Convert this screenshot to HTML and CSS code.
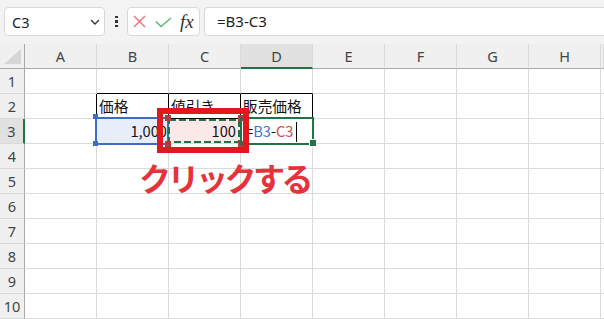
FILE: index.html
```html
<!DOCTYPE html>
<html lang="ja">
<head>
<meta charset="utf-8">
<title>Excel</title>
<link rel="stylesheet" href="styles.css">
</head>
<body>
<div class="toolbar">
  <div class="namebox">
    <span class="name">C3</span>
    <svg class="chev" width="10" height="6" viewBox="0 0 10 6"><path d="M1 1 L5 5 L9 1" fill="none" stroke="#333" stroke-width="1.3"/></svg>
  </div>
  <div class="dots"><i></i><i></i><i></i></div>
  <div class="fbtns">
    <svg class="ic-x" width="13" height="13" viewBox="0 0 13 13"><path d="M1 1 L12 12 M12 1 L1 12" stroke="#e8707a" stroke-width="1.4" fill="none"/></svg>
    <svg class="ic-ok" width="17" height="11" viewBox="0 0 17 11"><path d="M1 4.5 L6 9.5 L16 1" stroke="#5fb575" stroke-width="1.4" fill="none"/></svg>
    <span class="fx">fx</span>
  </div>
  <div class="finput">=B3-C3</div>
</div>

<div class="sheet">
  <div class="h corner"><svg width="17" height="15" viewBox="0 0 17 15"><polygon points="17,0 17,15 0,15" fill="#d6d6d6"/></svg></div>
  <div class="h">A</div><div class="h">B</div><div class="h">C</div><div class="h sel-c">D</div><div class="h">E</div><div class="h">F</div><div class="h">G</div><div class="h">H</div><div class="h"></div>

  <div class="r">1</div><div class="c"></div><div class="c bb"></div><div class="c bb"></div><div class="c bb"></div><div class="c"></div><div class="c"></div><div class="c"></div><div class="c"></div><div class="c"></div>

  <div class="r">2</div><div class="c br"></div><div class="c br bb">価格</div><div class="c br bb">値引き</div><div class="c br bb">販売価格</div><div class="c"></div><div class="c"></div><div class="c"></div><div class="c"></div><div class="c"></div>

  <div class="r sel-r">3</div><div class="c"></div><div class="c num fill-b">1,000</div><div class="c num fill-p">100</div><div class="c edit">=<span class="ref-b">B3</span>-<span class="ref-r">C3</span><span class="caret"></span></div><div class="c"></div><div class="c"></div><div class="c"></div><div class="c"></div><div class="c"></div>

  <div class="r">4</div><div class="c"></div><div class="c"></div><div class="c"></div><div class="c"></div><div class="c"></div><div class="c"></div><div class="c"></div><div class="c"></div><div class="c"></div>
  <div class="r">5</div><div class="c"></div><div class="c"></div><div class="c"></div><div class="c"></div><div class="c"></div><div class="c"></div><div class="c"></div><div class="c"></div><div class="c"></div>
  <div class="r">6</div><div class="c"></div><div class="c"></div><div class="c"></div><div class="c"></div><div class="c"></div><div class="c"></div><div class="c"></div><div class="c"></div><div class="c"></div>
  <div class="r">7</div><div class="c"></div><div class="c"></div><div class="c"></div><div class="c"></div><div class="c"></div><div class="c"></div><div class="c"></div><div class="c"></div><div class="c"></div>
  <div class="r">8</div><div class="c"></div><div class="c"></div><div class="c"></div><div class="c"></div><div class="c"></div><div class="c"></div><div class="c"></div><div class="c"></div><div class="c"></div>
  <div class="r">9</div><div class="c"></div><div class="c"></div><div class="c"></div><div class="c"></div><div class="c"></div><div class="c"></div><div class="c"></div><div class="c"></div><div class="c"></div>
  <div class="r">10</div><div class="c"></div><div class="c"></div><div class="c"></div><div class="c"></div><div class="c"></div><div class="c"></div><div class="c"></div><div class="c"></div><div class="c"></div>

  <div class="sel-blue"></div>
  <div class="hd hd-b hb1"></div>
  <div class="hd hd-b hb2"></div>
  <svg class="ants" width="72" height="24" viewBox="0 0 72 24"><rect x="1" y="1" width="70" height="22" fill="none" stroke="#217346" stroke-width="2" stroke-dasharray="7 3"/></svg>
  <div class="hd hd-r hr1"></div>
  <div class="hd hd-r hr2"></div>
  <div class="hd hd-r hr3"></div>
  <div class="hd hd-r hr4"></div>
  <div class="active"></div>
  <div class="fillh"></div>
  <div class="callout"></div>
  <div class="note">クリックする</div>
</div>
</body>
</html>
```

FILE: styles.css
```css
body {
  margin: 0;
  width: 604px;
  height: 319px;
  overflow: hidden;
  background: #fff;
  font-family: "Noto Sans", "Noto Sans CJK JP", sans-serif;
}

/* ---------- formula bar ---------- */
.toolbar {
  height: 44px;
  box-sizing: border-box;
  background: #f3f3f3;
  display: flex;
  align-items: flex-start;
  padding: 7px 0 0 4px;
}
.namebox {
  width: 101px;
  height: 29px;
  box-sizing: border-box;
  background: #fff;
  border: 1px solid #d9d9d9;
  border-radius: 4px;
  display: flex;
  align-items: center;
  justify-content: space-between;
  padding: 0 4px 0 7px;
}
.name {
  font-size: 14.5px;
  color: #222;
}
.dots {
  margin-left: 10px;
  width: 3px;
  height: 29px;
  display: flex;
  flex-direction: column;
  justify-content: center;
  gap: 2px;
}
.dots i {
  display: block;
  width: 2.5px;
  height: 2.5px;
  background: #333;
}
.fbtns {
  margin-left: 9px;
  width: 73px;
  height: 29px;
  box-sizing: border-box;
  background: #fff;
  border: 1px solid #d9d9d9;
  border-radius: 4px;
  display: flex;
  align-items: center;
  padding-left: 5px;
}
.ic-ok { margin-left: 9px; margin-top: 2px; }
.fx {
  margin-left: 8px;
  font-family: "Liberation Serif", serif;
  font-style: italic;
  font-size: 19px;
  color: #333;
  line-height: 1;
}
.finput {
  margin-left: 4px;
  flex: 1;
  height: 29px;
  box-sizing: border-box;
  background: #fff;
  border: 1px solid #d9d9d9;
  border-right: none;
  border-radius: 4px 0 0 4px;
  padding-left: 12px;
  font-size: 15px;
  line-height: 27px;
  color: #222;
}

/* ---------- sheet grid ---------- */
.sheet {
  position: relative;
  display: grid;
  grid-template-columns: 25px repeat(8, 72px) 3px;
  grid-template-rows: repeat(11, 25px);
  overflow: hidden;
}
.h, .r {
  box-sizing: border-box;
  background: #f0f0f0;
  color: #444;
  font-family: "Noto Sans", sans-serif;
  font-size: 14.5px;
  line-height: 24px;
  text-align: center;
}
.h {
  border-right: 1px solid #dadada;
  border-bottom: 1px solid #a8a8a8;
}
.r {
  border-right: 1px solid #a8a8a8;
  border-bottom: 1px solid #dadada;
}
.corner {
  border-right: 1px solid #a8a8a8;
  display: flex;
  align-items: flex-end;
  justify-content: flex-end;
  padding: 0 3px 4px 0;
}
.corner svg { display: block; }
.sel-c {
  background: #e1e1e1;
  border-bottom: 2px solid #217346;
}
.sel-r {
  background: #e1e1e1;
  border-right: 2px solid #217346;
}
.c {
  box-sizing: border-box;
  border-right: 1px solid #dadada;
  border-bottom: 1px solid #dadada;
  font-family: "Noto Sans CJK JP", sans-serif;
  font-size: 14.67px;
  line-height: 24px;
  padding: 0 2px;
  white-space: nowrap;
  color: #111;
}
.br { border-right-color: #000; }
.bb { border-bottom-color: #000; }
.num { text-align: right; }
.fill-b { background: #e8eef9; padding-right: 1px; }
.fill-p { background: #fbe9ea; padding-right: 4px; }
.edit { padding-left: 4px; }
.ref-b { color: #3f74d4; }
.ref-r { color: #d64c4f; }
.caret {
  display: inline-block;
  width: 1px;
  height: 20px;
  background: #000;
  margin-left: 2px;
  vertical-align: -5px;
}

/* ---------- overlays ---------- */
.sel-blue {
  position: absolute;
  left: 95px;
  top: 73px;
  width: 74px;
  height: 28px;
  box-sizing: border-box;
  border: 2px solid #3c6dc5;
}
.hd {
  position: absolute;
  width: 5px;
  height: 5px;
}
.hd-b { background: #3c6dc5; }
.hd-r { background: #b9373f; width: 6px; height: 6px; }
.hb1 { left: 93px; top: 70px; }
.hb2 { left: 93px; top: 97px; }
.hr1 { left: 165px; top: 71px; }
.hr2 { left: 238px; top: 71px; }
.hr3 { left: 165px; top: 97px; }
.hr4 { left: 238px; top: 97px; }
.ants {
  position: absolute;
  left: 168px;
  top: 75px;
}
.active {
  position: absolute;
  left: 240px;
  top: 73px;
  width: 74px;
  height: 28px;
  box-sizing: border-box;
  border: 2px solid #217346;
}
.fillh {
  position: absolute;
  left: 309px;
  top: 95px;
  width: 8px;
  height: 8px;
  box-sizing: border-box;
  background: #217346;
  border: 1px solid #fff;
}
.callout {
  position: absolute;
  left: 157px;
  top: 64px;
  width: 92px;
  height: 45px;
  box-sizing: border-box;
  border: 6px solid #e4171f;
}
.note {
  position: absolute;
  left: 139px;
  top: 114px;
  font-family: "Noto Sans CJK JP", sans-serif;
  font-weight: 700;
  font-size: 32px;
  line-height: 1.2;
  letter-spacing: -3.5px;
  color: #e6333b;
  white-space: nowrap;
}
```
